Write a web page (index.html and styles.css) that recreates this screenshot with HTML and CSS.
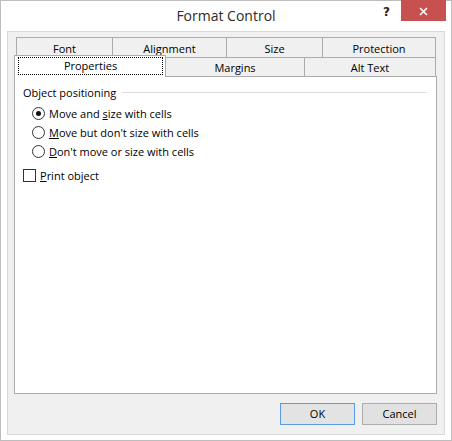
FILE: index.html
```html
<!DOCTYPE html>
<html>
<head>
<meta charset="utf-8">
<link rel="stylesheet" href="styles.css">
</head>
<body>
<div class="window">
  <div class="titlebar">
    <div></div>
    <div class="title">Format Control</div>
    <div class="controls">
      <span class="help">?</span>
      <span class="close"><svg width="9" height="9" viewBox="0 0 9 9"><path d="M1 1L8 8M8 1L1 8" stroke="#fff" stroke-width="1.6" fill="none"/></svg></span>
    </div>
  </div>
  <div class="client">
    <div class="tabs">
      <div class="row row1">
        <div class="tab t-font">Font</div>
        <div class="tab t-align">Alignment</div>
        <div class="tab t-size">Size</div>
        <div class="tab t-prot last">Protection</div>
      </div>
      <div class="row row2">
        <div class="tab selected t-props"><div class="focus">Properties</div></div>
        <div class="tab t-marg">Margins</div>
        <div class="tab t-alt last">Alt Text</div>
      </div>
    </div>
    <div class="panel">
      <div class="group-head"><span>Object positioning</span><span class="rule"></span></div>
      <div class="radios">
        <div class="opt"><span class="radio checked"></span><span>Move and <u>s</u>ize with cells</span></div>
        <div class="opt"><span class="radio"></span><span><u>M</u>ove but don't size with cells</span></div>
        <div class="opt"><span class="radio"></span><span><u>D</u>on't move or size with cells</span></div>
      </div>
      <div class="check"><span class="box"></span><span><u>P</u>rint object</span></div>
    </div>
    <div class="buttons">
      <div class="btn default">OK</div>
      <div class="btn">Cancel</div>
    </div>
  </div>
</div>
</body>
</html>
```

FILE: styles.css
```css
* { box-sizing: border-box; }
body {
  margin: 0;
  background: #fff;
  font-family: "Open Sans", "Noto Sans", sans-serif;
  font-size: 11px;
  color: #000;
}
.window {
  width: 452px;
  height: 441px;
  border: 1px solid #bdbdbd;
  background: #fff;
  display: flex;
  flex-direction: column;
}
.titlebar {
  height: 30px;
  flex: none;
  display: grid;
  grid-template-columns: 1fr auto 1fr;
}
.title {
  font-size: 14px;
  line-height: 18px;
  padding-top: 6px;
  color: #2b2b2b;
}
.controls {
  display: flex;
  justify-content: flex-end;
  align-items: flex-start;
}
.help {
  font-family: "DejaVu Sans", sans-serif;
  font-weight: bold;
  font-size: 12px;
  line-height: 12px;
  margin-top: 5px;
  margin-right: 11px;
  color: #222;
}
.close {
  width: 45px;
  height: 21px;
  margin-top: -1px;
  margin-right: 5px;
  background: #c75050;
  display: flex;
  align-items: center;
  justify-content: center;
  padding-top: 2px;
}
.close svg { display: block; }
.client {
  flex: 1;
  margin: 0 6px 5px 6px;
  border: 1px solid #d9d9d9;
  background: #f0f0f0;
  padding: 5px 7px 9px 6px;
  display: flex;
  flex-direction: column;
}
.tabs {
  margin-left: 2px;
  flex: none;
}
.row {
  display: flex;
  align-items: flex-start;
}
.row1 { height: 20px; }
.row2 { height: 19px; }
.tab {
  border-top: 1px solid #acacac;
  border-left: 1px solid #acacac;
  background: #f0f0f0;
  height: 100%;
  text-align: center;
  flex: none;
}
.tab.last { border-right: 1px solid #acacac; }
.row1 .tab { line-height: 17px; padding-top: 2px; }
.row2 .tab { line-height: 17px; padding-top: 1px; }
.t-font { width: 96px; }
.t-align { width: 114px; }
.t-size { width: 96px; }
.t-prot { width: 114px; }
.t-props { width: 152px; }
.t-marg { width: 139px; }
.t-alt { width: 132px; }
.tab.selected {
  position: relative;
  z-index: 2;
  background: #fff;
  border-right: 1px solid #acacac;
  height: 22px;
  margin: -2px -1px -1px -2px;
  padding: 1px 2px 2px 3px;
}
.focus {
  height: 100%;
  border: 1px dotted #000;
  line-height: 15px;
  padding-top: 0;
}
.panel {
  flex: 1;
  background: #fff;
  border: 1px solid #acacac;
  padding: 8px 9px 0 8px;
}
.group-head {
  display: flex;
  align-items: center;
  line-height: 15px;
  color: #000;
}
.rule {
  flex: 1;
  height: 1px;
  background: #dcdcdc;
  margin-left: 6px;
  margin-top: -1px;
}
.radios {
  margin-top: 4px;
  margin-left: 9px;
}
.opt, .check {
  height: 19px;
  display: flex;
  align-items: center;
}
.radio {
  width: 13px;
  height: 13px;
  border: 1px solid #333;
  border-radius: 50%;
  background: #fff;
  margin-right: 4px;
  display: flex;
  align-items: center;
  justify-content: center;
  flex: none;
}
.radio.checked::after {
  content: "";
  width: 5px;
  height: 5px;
  border-radius: 50%;
  background: #111;
}
.check { margin-top: 5px; }
.box {
  width: 13px;
  height: 13px;
  border: 1px solid #333;
  background: #fff;
  margin-right: 4px;
  flex: none;
}
.buttons {
  flex: none;
  display: flex;
  justify-content: flex-end;
  gap: 7px;
  margin-top: 9px;
}
.btn {
  width: 75px;
  height: 22px;
  border: 1px solid #adadad;
  background: #e1e1e1;
  text-align: center;
  line-height: 20px;
}
.btn.default {
  border-color: #569de5;
  background: #e3e3e3;
}
```
